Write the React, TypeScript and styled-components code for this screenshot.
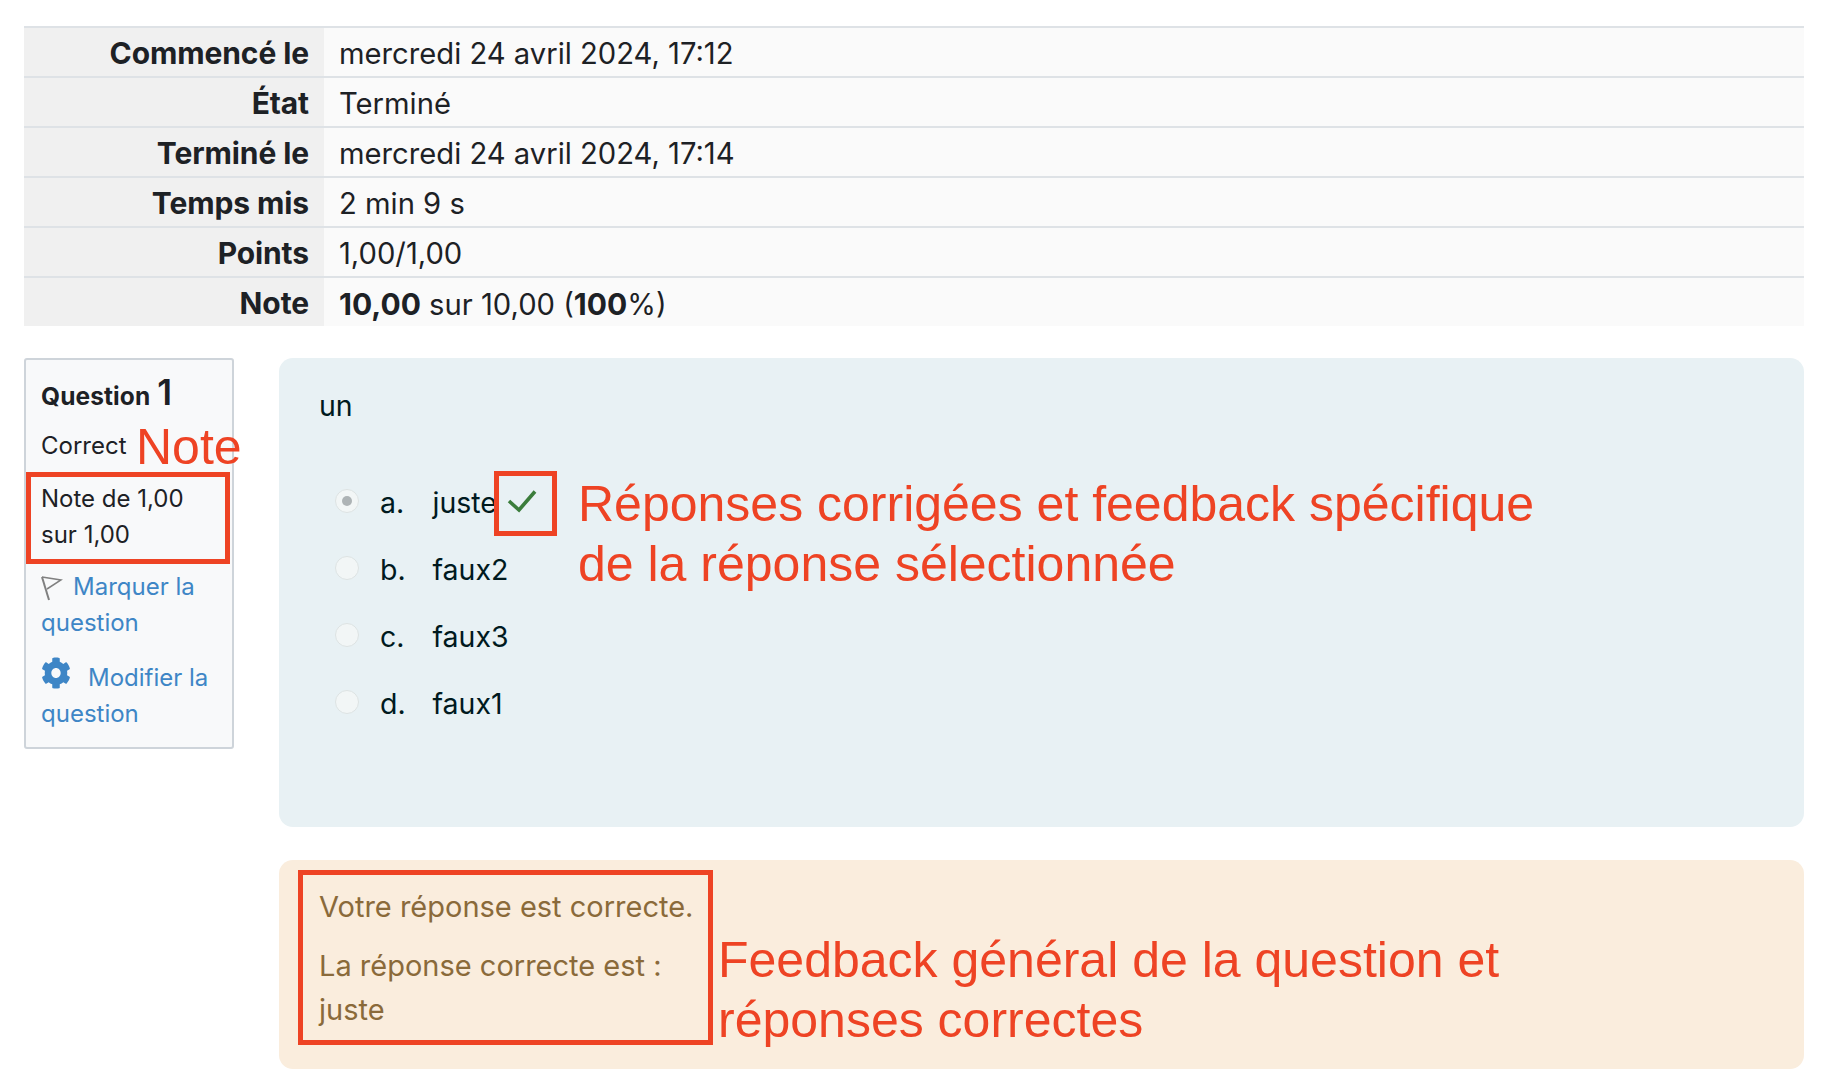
import React from "react";
import styled, { createGlobalStyle } from "styled-components";

const Global = createGlobalStyle`
  html, body { margin: 0; padding: 0; background: #fff; }
  body { font-family: Inter, "Liberation Sans", sans-serif; color: #1d2125; }
`;

const Page = styled.div`
  position: relative;
  width: 1832px;
  height: 1090px;
  overflow: hidden;
  box-sizing: border-box;
  padding: 26px 28px 0 24px;
`;

const Summary = styled.div`
  display: grid;
  grid-template-columns: 300px 1fr;
  border-top: 2px solid #dee2e6;
`;

const Th = styled.div<{ $last?: boolean }>`
  height: 47px;
  padding: 1px 15px 0 0;
  line-height: 48px;
  background: #f0f0f0;
  border-bottom: ${(p) => (p.$last ? "0" : "2px solid #dee2e6")};
  text-align: right;
  font-size: 30px;
  font-weight: 700;
  letter-spacing: -0.1px;
`;

const Td = styled.div<{ $last?: boolean }>`
  height: 46px;
  padding: 2px 0 0 15px;
  line-height: 48px;
  background: #fafafa;
  border-bottom: ${(p) => (p.$last ? "0" : "2px solid #dee2e6")};
  font-size: 29.2px;
  font-weight: 400;
  b { font-weight: 700; font-size: 30px; }
`;

const Question = styled.div`
  display: flex;
  gap: 45px;
  margin-top: 32px;
`;

const Info = styled.div`
  flex: none;
  box-sizing: border-box;
  width: 210px;
  height: 391px;
  background: #f8f9fa;
  border: 2px solid #ced4da;
  border-radius: 3px;
  padding: 10px 10px 0 15px;
  font-size: 24px;
  line-height: 36px;
`;

const QTitle = styled.div`
  font-weight: 700;
  font-size: 24.5px;
  height: 44px;
  line-height: 44px;
  letter-spacing: 0.1px;
  span { font-size: 35px; font-weight: 600; margin-left: -2px; }
`;

const State = styled.div`
  height: 36px;
  margin-top: 14px;
`;

const Grade = styled.div`
  margin-top: 17px;
`;

const Action = styled.div<{ $gap: number }>`
  margin-top: ${(p) => p.$gap}px;
  color: #3e86c6;
`;

const FlagIcon = styled.svg`
  display: inline-block;
  margin-right: 10px;
  vertical-align: -7px;
`;

const GearIcon = styled.svg`
  display: inline-block;
  margin-right: 17px;
  vertical-align: -3px;
`;

const Content = styled.div`
  flex: 1;
  display: flex;
  flex-direction: column;
  gap: 33px;
`;

const Formulation = styled.div`
  box-sizing: border-box;
  height: 469px;
  background: #e8f1f4;
  border-radius: 14px;
  padding: 28px 40px;
  font-size: 28.5px;
  color: #001a1e;
`;

const Prompt = styled.div`
  line-height: 40px;
  margin-bottom: 43px;
`;

const Choice = styled.div`
  display: flex;
  align-items: center;
  height: 67px;
  padding-left: 14px;
`;

const Radio = styled.span<{ $on?: boolean }>`
  flex: none;
  position: relative;
  box-sizing: border-box;
  width: 24px;
  height: 24px;
  border-radius: 50%;
  background: #f2f6f6;
  border: 1px solid #dde3e3;
  margin-right: 21px;
  margin-left: 2px;
  margin-top: -3px;
  &::after {
    content: "";
    display: ${(p) => (p.$on ? "block" : "none")};
    position: absolute;
    left: 6px;
    top: 6px;
    width: 10px;
    height: 10px;
    border-radius: 50%;
    background: #adb3b5;
  }
`;

const Letter = styled.span`
  width: 52.5px;
`;

const Feedback = styled.div`
  box-sizing: border-box;
  height: 209px;
  background: #faeddd;
  border-radius: 14px;
  padding: 25px 40px;
  font-size: 29px;
  color: #8a6a3a;
  line-height: 44px;
  p { margin: 0 0 15px; }
`;

const Box = styled.div<{ $x: number; $y: number; $w: number; $h: number }>`
  position: absolute;
  box-sizing: border-box;
  left: ${(p) => p.$x}px;
  top: ${(p) => p.$y}px;
  width: ${(p) => p.$w}px;
  height: ${(p) => p.$h}px;
  border: 5px solid #ee4324;
`;

const Note = styled.div<{ $x: number; $y: number }>`
  position: absolute;
  left: ${(p) => p.$x}px;
  top: ${(p) => p.$y}px;
  font-family: "Liberation Sans", Arial, sans-serif;
  font-size: 50px;
  line-height: 60px;
  color: #ee4324;
  white-space: nowrap;
`;

const Tick = styled.svg`
  position: absolute;
  left: 507px;
  top: 488px;
`;

const rows: [string, React.ReactNode][] = [
  ["Commencé le", "mercredi 24 avril 2024, 17:12"],
  ["État", "Terminé"],
  ["Terminé le", "mercredi 24 avril 2024, 17:14"],
  ["Temps mis", "2 min 9 s"],
  ["Points", "1,00/1,00"],
  ["Note", <><b>10,00</b> sur 10,00 (<b>100</b>%)</>],
];

const choices = [
  ["a.", "juste"],
  ["b.", "faux2"],
  ["c.", "faux3"],
  ["d.", "faux1"],
];

export default function App() {
  return (
    <Page>
      <Global />
      <Summary>
        {rows.map(([k, v], i) => (
          <React.Fragment key={k}>
            <Th $last={i === 5}>{k}</Th>
            <Td $last={i === 5}>{v}</Td>
          </React.Fragment>
        ))}
      </Summary>
      <Question>
        <Info>
          <QTitle>Question<span> 1</span></QTitle>
          <State>Correct</State>
          <Grade>Note de 1,00<br />sur 1,00</Grade>
          <Action $gap={16}>
            <FlagIcon width="22" height="26" viewBox="0 0 22 26" fill="none" stroke="#808080" strokeWidth="1.5">
              <path d="M1 1 L8 24" strokeWidth="2" />
              <path d="M1 1 L20 4 L6 13" />
            </FlagIcon>
            Marquer la question
          </Action>
          <Action $gap={16}>
            <GearIcon width="30" height="32" viewBox="0 0 512 512" fill="#3e86c6" preserveAspectRatio="none">
              <path d="M487.4 315.7l-42.6-24.6c4.3-23.2 4.3-47 0-70.2l42.6-24.6c4.9-2.8 7.1-8.6 5.5-14-11.1-35.6-30-67.8-54.7-94.6-3.8-4.1-10-5.1-14.8-2.3L380.8 110c-17.9-15.4-38.5-27.3-60.8-35.1V25.8c0-5.6-3.9-10.5-9.4-11.7-36.7-8.2-74.3-7.8-109.2 0-5.5 1.2-9.4 6.1-9.4 11.7V75c-22.2 7.9-42.8 19.8-60.8 35.1L88.7 85.5c-4.9-2.8-11-1.9-14.8 2.3-24.7 26.7-43.6 58.9-54.7 94.6-1.7 5.4.6 11.2 5.5 14L67.3 221c-4.3 23.2-4.3 47 0 70.2l-42.6 24.6c-4.9 2.8-7.1 8.6-5.5 14 11.1 35.6 30 67.8 54.7 94.6 3.8 4.1 10 5.1 14.8 2.3l42.6-24.6c17.9 15.4 38.5 27.3 60.8 35.1v49.2c0 5.6 3.9 10.5 9.4 11.7 36.7 8.2 74.3 7.8 109.2 0 5.5-1.2 9.4-6.1 9.4-11.7v-49.2c22.2-7.9 42.8-19.8 60.8-35.1l42.6 24.6c4.9 2.8 11 1.9 14.8-2.3 24.7-26.7 43.6-58.9 54.7-94.6 1.5-5.5-.7-11.3-5.6-14.1zM256 336c-44.1 0-80-35.9-80-80s35.9-80 80-80 80 35.9 80 80-35.9 80-80 80z" />
            </GearIcon>
            Modifier la question
          </Action>
        </Info>
        <Content>
          <Formulation>
            <Prompt>un</Prompt>
            {choices.map(([l, t], i) => (
              <Choice key={l}>
                <Radio $on={i === 0} />
                <Letter>{l}</Letter>
                <span>{t}</span>
              </Choice>
            ))}
          </Formulation>
          <Feedback>
            <p>Votre réponse est correcte.</p>
            <div>La réponse correcte est :<br />juste</div>
          </Feedback>
        </Content>
      </Question>

      <Note $x={136} $y={417}>Note</Note>
      <Box $x={26} $y={472} $w={204} $h={92} />
      <Box $x={494} $y={471} $w={63} $h={65} />
      <Tick width="32" height="28" viewBox="0 0 32 28" fill="none" stroke="#3b7d3b" strokeWidth="3.6">
        <path d="M2 13 L12 22 L28 3.5" />
      </Tick>
      <Note $x={578} $y={474}>Réponses corrigées et feedback spécifique</Note>
      <Note $x={578} $y={534}>de la réponse sélectionnée</Note>
      <Box $x={298} $y={870} $w={415} $h={175} />
      <Note $x={718} $y={930}>Feedback général de la question et</Note>
      <Note $x={718} $y={990}>réponses correctes</Note>
    </Page>
  );
}
